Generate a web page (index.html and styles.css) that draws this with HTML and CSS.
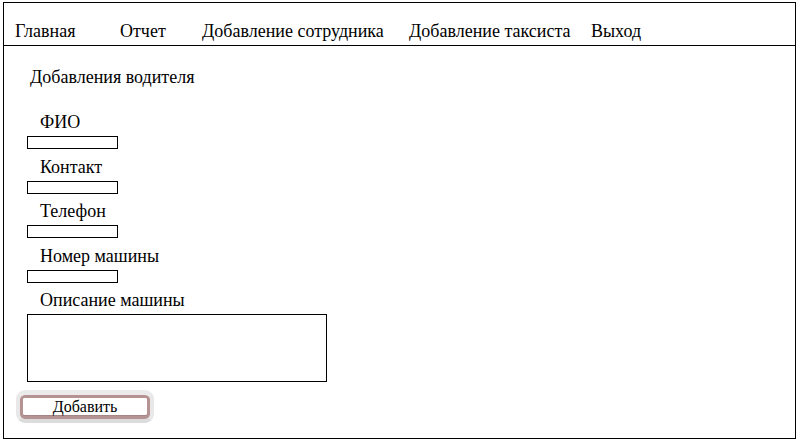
FILE: index.html
```html
<!DOCTYPE html>
<html lang="ru">
    <head>
        <meta charset="UTF-8" />
        <meta name="viewport" content="width=device-width, initial-scale=1.0" />
        <title>Добавление водителя</title>
        <link rel="stylesheet" href="styles.css">
    </head>
    <body>
        <div class="frame">
            <div class="menu">
                <a class="menu-item w-main">Главная</a>
                <a class="menu-item w-report">Отчет</a>
                <a class="menu-item w-staff">Добавление сотрудника</a>
                <a class="menu-item w-taxi">Добавление таксиста</a>
                <a class="menu-item">Выход</a>
            </div>
            <div class="content">
                <div class="title">Добавления водителя</div>
                <form name="formDriver" class="form">
                    <div class="label">ФИО</div>
                    <input type="text" name="fio" class="field" />
                    <div class="label">Контакт</div>
                    <input type="text" name="contact" class="field" />
                    <div class="label">Телефон</div>
                    <input type="text" name="phone" class="field" />
                    <div class="label">Номер машины</div>
                    <input type="text" name="carnum" class="field" />
                    <div class="label">Описание машины</div>
                    <textarea name="cardesc" class="area"></textarea>
                    <input type="button" class="btn" value="Добавить" />
                </form>
            </div>
        </div>
    </body>
</html>
```

FILE: styles.css
```css
body {
    margin: 0;
    font-family: "Liberation Serif", "Times New Roman", serif;
    font-size: 18px;
    color: #000;
    background-color: #fff;
}

.frame {
    margin: 2px 0 0 3px;
    width: 793px;
    height: 437px;
    border: 1px solid #000;
    box-sizing: border-box;
}

.menu {
    display: flex;
    padding: 18px 0 4px 11px;
    line-height: 20px;
    border-bottom: 1px solid #000;
}

.menu-item {
    white-space: nowrap;
}

.w-main {
    width: 105px;
}

.w-report {
    width: 82px;
}

.w-staff {
    width: 207px;
}

.w-taxi {
    width: 182px;
}

.content {
    padding-left: 12px;
}

.title {
    margin: 21px 0 0 14px;
    line-height: 20px;
}

.form {
    display: flex;
    flex-direction: column;
    align-items: flex-start;
    margin-top: 25px;
}

.label {
    margin: 0 0 4px 24px;
    line-height: 20px;
}

.field {
    width: 91px;
    height: 13px;
    margin: 0 0 7.5px 11px;
    padding: 0;
    border: 1px solid #000;
    box-sizing: border-box;
}

.area {
    width: 300px;
    height: 68px;
    margin: 0 0 8px 11px;
    padding: 0;
    border: 1px solid #000;
    box-sizing: border-box;
    resize: none;
}

.btn {
    width: 138px;
    height: 33px;
    margin: 0;
    padding: 0;
    border-style: solid;
    border-width: 5px 4px 4px 4px;
    border-color: #ebebeb #e8e8e8 #dcdcdc #e8e8e8;
    border-radius: 9px;
    box-shadow: inset 0 0 0 3px #b59393, inset 0 -4px 0 0 #a58585;
    background-color: #fff;
    font-family: "Liberation Serif", "Times New Roman", serif;
    font-size: 16px;
    color: #000;
    box-sizing: border-box;
}
```
